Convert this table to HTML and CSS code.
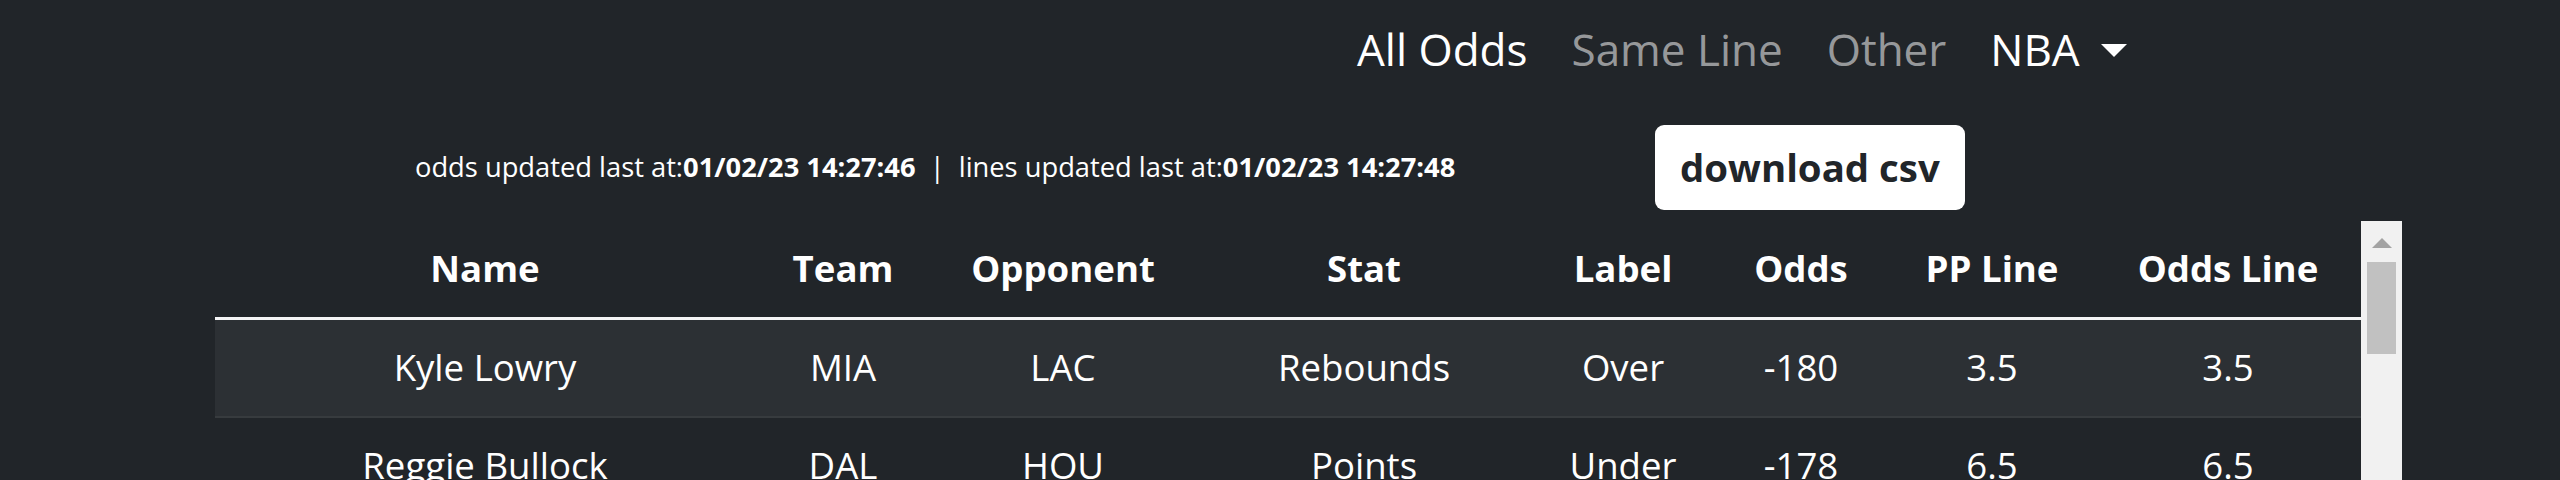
FILE: index.html
```html
<!DOCTYPE html>
<html>
<head>
    <meta charset="UTF-8">
    <title>Odds</title>
    <link rel="stylesheet" href="styles.css">
</head>
<body>

<nav class="topNav">
    <a class="navLink active" href="#">All Odds</a>
    <a class="navLink" href="#">Same Line</a>
    <a class="navLink" href="#">Other</a>
    <a class="navLink dropdown" href="#">NBA <span class="caret"></span></a>
</nav>

<div class="page">

    <div class="metaRow">
        <p class="updated">
            odds updated last at:<b>01/02/23 14:27:46</b>
            <span class="sep">|</span>
            lines updated last at:<b>01/02/23 14:27:48</b>
        </p>
        <button class="btn">download csv</button>
    </div>

    <div class="tableWrap">
        <table class="oddsTable">
            <colgroup>
                <col class="cName">
                <col class="cTeam">
                <col class="cOpp">
                <col class="cStat">
                <col class="cLabel">
                <col class="cOdds">
                <col class="cPp">
                <col class="cLine">
            </colgroup>
            <thead>
                <tr>
                    <th>Name</th>
                    <th>Team</th>
                    <th>Opponent</th>
                    <th>Stat</th>
                    <th>Label</th>
                    <th>Odds</th>
                    <th>PP Line</th>
                    <th>Odds Line</th>
                </tr>
            </thead>
            <tbody>
                <tr>
                    <td>Kyle Lowry</td>
                    <td>MIA</td>
                    <td>LAC</td>
                    <td>Rebounds</td>
                    <td>Over</td>
                    <td>-180</td>
                    <td>3.5</td>
                    <td>3.5</td>
                </tr>
                <tr>
                    <td>Reggie Bullock</td>
                    <td>DAL</td>
                    <td>HOU</td>
                    <td>Points</td>
                    <td>Under</td>
                    <td>-178</td>
                    <td>6.5</td>
                    <td>6.5</td>
                </tr>
            </tbody>
        </table>

        <!-- fake scrollbar, the list is scrolled inside the frame -->
        <div class="scrollbar">
            <span class="scrollUp"></span>
            <span class="scrollThumb"></span>
        </div>
    </div>

</div>
</body>
</html>
```

FILE: styles.css
```css
html {
    width: 100%;
    height: 100%;
}

body {
    margin: 0;
    background: #212529;
    color: #fff;
    font-family: "Open Sans", "Noto Sans", sans-serif;
    font-size: 38.4px;
    line-height: 1.5;
    overflow: hidden;
}

/* top navigation */
.topNav {
    display: flex;
    align-items: center;
    gap: 44px;
    padding: 16px 0 16px 1357px;
}

.navLink {
    color: rgba(255, 255, 255, 0.55);
    text-decoration: none;
    font-size: 44px;
    line-height: 66px;
}

.navLink.active,
.navLink.dropdown {
    color: #fff;
}

.caret {
    display: inline-block;
    margin-left: 10px;
    vertical-align: 9px;
    border-top: 13px solid #fff;
    border-left: 13px solid transparent;
    border-right: 13px solid transparent;
}

.page {
    padding: 0 158px 0 215px;
}

/* update info + csv button */
.metaRow {
    display: grid;
    grid-template-columns: 1240px auto;
    align-items: center;
    justify-items: start;
    padding-left: 200px;
    margin-top: 27px;
}

.updated {
    margin: 0;
    font-size: 27.3px;
}

.updated b {
    font-weight: 700;
}

.sep {
    margin: 0 7px;
}

.btn {
    background: #fff;
    color: #212529;
    border: none;
    border-radius: 9px;
    font-family: inherit;
    font-size: 38.4px;
    font-weight: 700;
    line-height: 58px;
    padding: 13px 25px 14px;
}

/* table */
.tableWrap {
    display: flex;
    margin-top: 11px;
}

.oddsTable {
    flex: 1;
    border-collapse: collapse;
    table-layout: fixed;
    text-align: center;
    font-size: 36.6px;
    line-height: 57.6px;
}

.cName { width: 540px; }
.cTeam { width: 176px; }
.cOpp { width: 264px; }
.cStat { width: 338px; }
.cLabel { width: 180px; }
.cOdds { width: 176px; }
.cPp { width: 206px; }
.cLine { width: 266px; }

.oddsTable th {
    font-weight: 700;
    padding: 19.2px;
    border-bottom: 3px solid #f4f5f6;
}

.oddsTable td {
    padding: 19.2px;
    border-bottom: 2.4px solid #373b3e;
    white-space: nowrap;
}

.oddsTable tbody tr:nth-child(odd) {
    background: #2c3034;
}

.scrollbar {
    width: 41px;
    flex: none;
    background: #f1f1f1;
    display: flex;
    flex-direction: column;
    align-items: center;
}

.scrollUp {
    margin-top: 17px;
    border-bottom: 10px solid #a3a3a3;
    border-left: 10px solid transparent;
    border-right: 10px solid transparent;
}

.scrollThumb {
    margin-top: 14px;
    width: 29px;
    height: 92px;
    background: #c1c1c1;
}
```
